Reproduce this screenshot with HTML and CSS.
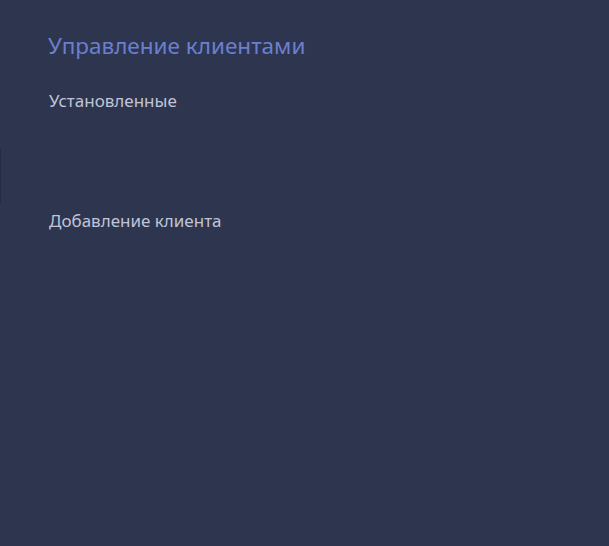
FILE: index.html
```html
<!DOCTYPE html>
<html lang="ru">
<head>
<meta charset="utf-8">
<title>Управление клиентами</title>
<link rel="stylesheet" href="styles.css">
</head>
<body>
<div class="edge"></div>
<main class="page">
  <h1 class="title">Управление клиентами</h1>
  <section class="group">
    <h2 class="label">Установленные</h2>
    <div class="list"></div>
  </section>
  <section class="group">
    <h2 class="label">Добавление клиента</h2>
  </section>
</main>
</body>
</html>
```

FILE: styles.css
```css
html, body {
  margin: 0;
  padding: 0;
  height: 100%;
  background: #2e354e;
}
body {
  font-family: "Noto Sans", "DejaVu Sans", sans-serif;
  position: relative;
}
.edge {
  position: absolute;
  left: 0;
  top: 148px;
  width: 1px;
  height: 56px;
  background: #262c42;
}
.page {
  padding: 31px 0 0 48px;
}
.title {
  margin: 0;
  font-size: 22.5px;
  font-weight: 400;
  line-height: 30px;
  color: #6b7fd0;
}
.group {
  margin-top: 29px;
}
.label {
  margin: 0 0 0 1px;
  font-size: 17px;
  font-weight: 400;
  line-height: 22px;
  color: #c0c4d8;
}
.list {
  height: 69px;
}
```
